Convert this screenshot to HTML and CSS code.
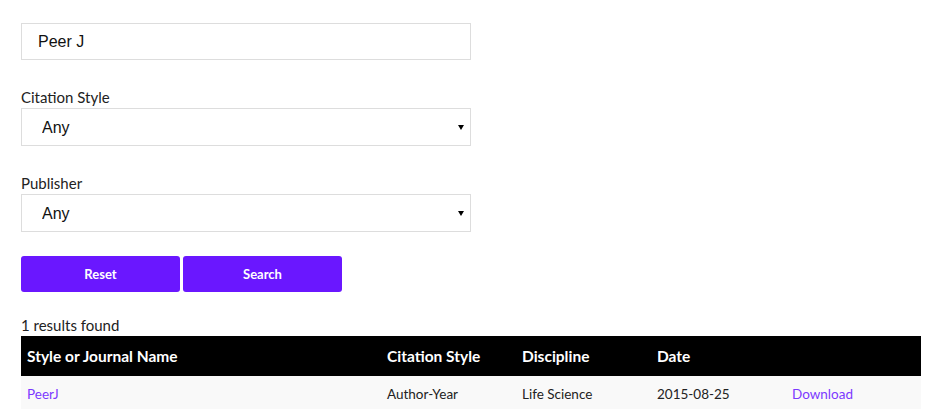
FILE: index.html
```html
<!DOCTYPE html>
<html lang="en">
<head>
  <meta charset="UTF-8" />
  <meta name="viewport" content="width=device-width, initial-scale=1" />
  <title>Style Search</title>
  <link rel="stylesheet" href="styles.css">
</head>
<body>
  <div class="finder">
    <form class="search-form">
      <div class="field">
        <input class="text-input" type="text" value="Peer J">
      </div>

      <div class="field">
        <label class="field-label">Citation Style</label>
        <div class="select-wrap">
          <select class="select-input">
            <option>Any</option>
          </select>
        </div>
      </div>

      <div class="field field-last">
        <label class="field-label">Publisher</label>
        <div class="select-wrap">
          <select class="select-input">
            <option>Any</option>
          </select>
        </div>
      </div>

      <div class="buttons">
        <button type="reset" class="btn">Reset</button>
        <button type="button" class="btn">Search</button>
      </div>
    </form>

    <p class="count">1 results found</p>

    <table class="results">
      <thead>
        <tr>
          <th class="col-name">Style or Journal Name</th>
          <th>Citation Style</th>
          <th>Discipline</th>
          <th>Date</th>
          <th></th>
        </tr>
      </thead>
      <tbody>
        <tr>
          <td><a href="#">PeerJ</a></td>
          <td>Author-Year</td>
          <td>Life Science</td>
          <td>2015-08-25</td>
          <td><a href="#">Download</a></td>
        </tr>
      </tbody>
    </table>
  </div>
</body>
</html>
```

FILE: styles.css
```css
body {
  margin: 0;
  font-family: Lato, "Open Sans", sans-serif;
  color: #222;
  background-color: #fff;
}

.finder {
  padding: 23px 11px 0 21px;
}

.search-form {
  width: 450px;
}

.field {
  margin-bottom: 26px;
}

.field-last {
  margin-bottom: 24px;
}

.field-label {
  display: block;
  font-size: 15px;
  line-height: 22px;
  color: #222;
}

.text-input,
.select-input {
  box-sizing: border-box;
  width: 100%;
  height: 37px;
  border: 1px solid #ddd;
  border-radius: 0;
  background-color: #fff;
  font-family: "Liberation Sans", Arial, sans-serif;
  font-size: 16px;
  color: #111;
  outline: none;
}

.text-input {
  padding: 0 16px;
}

.select-input {
  -webkit-appearance: none;
  appearance: none;
  height: 38px;
  padding: 0 20px;
}

.select-wrap {
  position: relative;
}

.select-wrap::after {
  content: "";
  position: absolute;
  right: 7px;
  top: 17px;
  border-left: 3px solid transparent;
  border-right: 3px solid transparent;
  border-top: 5px solid #000;
  pointer-events: none;
}

.buttons {
  display: flex;
  gap: 3px;
}

.btn {
  width: 159px;
  height: 36px;
  border: none;
  border-radius: 3px;
  background-color: #6a17ff;
  color: #fff;
  font-family: inherit;
  font-size: 13px;
  font-weight: bold;
  cursor: pointer;
}

.count {
  margin: 23px 0 0;
  font-size: 15px;
  line-height: 21px;
}

.results {
  width: 900px;
  border-collapse: collapse;
  table-layout: fixed;
}

.results th {
  background-color: #000;
  color: #fff;
  text-align: left;
  font-size: 15.5px;
  font-weight: bold;
  height: 40px;
  padding: 0 6px;
}

.results th.col-name {
  width: 348px;
}

.results td {
  background-color: #f9f9f9;
  font-size: 13.5px;
  height: 33px;
  padding: 1px 6px 0;
  color: #222;
}

.results a {
  color: #7c3aff;
  text-decoration: none;
}
```
